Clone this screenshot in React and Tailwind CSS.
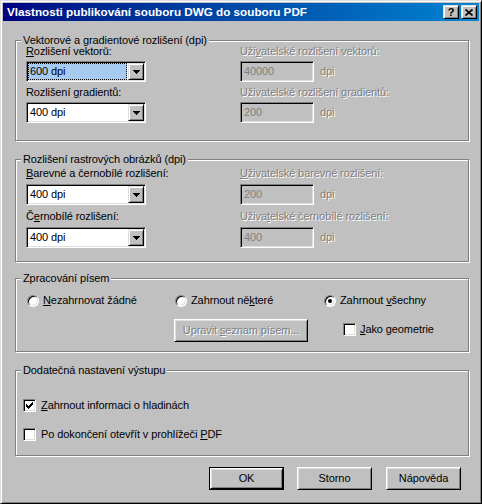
import React from "react";

const sunken =
  "border border-t-[#808080] border-l-[#808080] border-r-white border-b-white shadow-[inset_1px_1px_0_#000,inset_-1px_-1px_0_#dfdfdf]";
const raised =
  "border border-t-white border-l-white border-r-black border-b-black shadow-[inset_1px_1px_0_#dfdfdf,inset_-1px_-1px_0_#808080]";
const raisedSmall =
  "border border-t-[#dfdfdf] border-l-[#dfdfdf] border-r-black border-b-black shadow-[inset_1px_1px_0_#fff,inset_-1px_-1px_0_#808080]";
const dim = "text-[#808080] [text-shadow:1px_1px_0_#fff]";

function Key({ children }) {
  return <span className="underline">{children}</span>;
}

function Arrow() {
  return (
    <svg width="7" height="4" viewBox="0 0 7 4" shapeRendering="crispEdges">
      <rect x="0" y="0" width="7" height="1" fill="#000" />
      <rect x="1" y="1" width="5" height="1" fill="#000" />
      <rect x="2" y="2" width="3" height="1" fill="#000" />
      <rect x="3" y="3" width="1" height="1" fill="#000" />
    </svg>
  );
}

function Check() {
  const tops = [2, 3, 4, 3, 2, 1, 0];
  return (
    <svg width="7" height="7" viewBox="0 0 7 7" shapeRendering="crispEdges">
      {tops.map((y, x) => (
        <rect key={x} x={x} y={y} width="1" height="3" fill="#000" />
      ))}
    </svg>
  );
}

function Group({ title, className, children }) {
  return (
    <div className={`relative w-[454px] border border-[#808080] shadow-[inset_1px_1px_0_#fff,1px_1px_0_#fff] ${className}`}>
      <span className="absolute -top-[7px] left-[5px] bg-[#c0c0c0] px-[2px] leading-[13px]">{title}</span>
      {children}
    </div>
  );
}

function Combo({ value, focused }) {
  return (
    <div className={`flex h-[21px] w-[120px] bg-white p-[1px] ${sunken}`}>
      {focused ? (
        <div className="mr-[1px] flex flex-1 items-center border border-dotted border-black bg-[#a6caf0] pl-[1px]">
          {value}
        </div>
      ) : (
        <div className="flex flex-1 items-center pl-[2px]">{value}</div>
      )}
      <div className={`flex h-[17px] w-[16px] items-center justify-center bg-[#c0c0c0] ${raisedSmall}`}>
        <Arrow />
      </div>
    </div>
  );
}

function Edit({ value }) {
  return (
    <div className="flex items-center gap-[6px]">
      <div className={`flex h-[21px] w-[74px] items-center bg-[#c0c0c0] pl-[3px] text-[#808080] ${sunken}`}>
        {value}
      </div>
      <span className={dim}>dpi</span>
    </div>
  );
}

function Field({ label, disabled, gap, children }) {
  return (
    <div className={`flex flex-col ${gap}`}>
      <span className={`leading-[13px] ${disabled ? dim : ""}`}>{label}</span>
      {children}
    </div>
  );
}

function Radio({ checked, children }) {
  return (
    <div className="flex items-center gap-[4px] leading-[13px]">
      <div className="flex h-[12px] w-[12px] items-center justify-center rounded-full border border-t-[#808080] border-l-[#808080] border-r-white border-b-white bg-white shadow-[inset_1px_1px_0_#000,inset_-1px_-1px_0_#dfdfdf]">
        {checked && <div className="h-[4px] w-[4px] rounded-full bg-black" />}
      </div>
      <span>{children}</span>
    </div>
  );
}

function CheckBox({ checked, gap, children }) {
  return (
    <div className={`flex items-center leading-[13px] ${gap}`}>
      <div className={`flex h-[13px] w-[13px] items-center justify-center bg-white ${sunken}`}>
        {checked && <Check />}
      </div>
      <span>{children}</span>
    </div>
  );
}

function Button({ children, isDefault, className = "" }) {
  if (isDefault) {
    return (
      <div className={`h-[23px] w-[75px] border border-black ${className}`}>
        <div className={`flex h-full w-full items-center justify-center bg-[#c0c0c0] ${raised}`}>
          <span>{children}</span>
        </div>
      </div>
    );
  }
  return (
    <div className={`flex h-[23px] w-[75px] items-center justify-center bg-[#c0c0c0] ${raised} ${className}`}>
      <span>{children}</span>
    </div>
  );
}

export default function App() {
  return (
    <div className="flex h-[504px] w-[482px] flex-col border border-t-[#dfdfdf] border-l-[#dfdfdf] border-r-black border-b-black bg-[#c0c0c0] p-[2px] font-['Liberation_Sans',Arial,sans-serif] text-[11px] tracking-[-0.1px] text-black shadow-[inset_1px_1px_0_#fff,inset_-1px_-1px_0_#808080]">
      <div className="flex h-[18px] items-center justify-between bg-linear-to-r from-[#000080] to-[#1084d0] pl-[4px] pr-[2px]">
        <span className="text-[11.7px] font-bold tracking-normal text-white">
          Vlastnosti publikování souboru DWG do souboru PDF
        </span>
        <div className="flex gap-[2px]">
          <div className={`flex h-[14px] w-[16px] items-center justify-center bg-[#c0c0c0] text-[11px] font-bold leading-none ${raisedSmall}`}>
            ?
          </div>
          <div className={`flex h-[14px] w-[16px] items-center justify-center bg-[#c0c0c0] ${raisedSmall}`}>
            <svg width="8" height="7" viewBox="0 0 8 7">
              <path d="M0.5 0.5 L7.5 6.5 M7.5 0.5 L0.5 6.5" stroke="#000" strokeWidth="1.7" />
            </svg>
          </div>
        </div>
      </div>

      <div className="flex flex-col px-[12px]">
        <Group title="Vektorové a gradientové rozlišení (dpi)" className="mt-[19px] h-[101px]">
          <div className="grid grid-cols-[214px_1fr] gap-y-[4px] pl-[10px] pt-[4px]">
            <Field gap="gap-[3px]" label={<><Key>R</Key>ozlišení vektorů:</>}>
              <Combo value="600 dpi" focused />
            </Field>
            <Field gap="gap-[3px]" disabled label={<>Uži<Key>v</Key>atelské rozlišení vektorů:</>}>
              <Edit value="40000" />
            </Field>
            <Field gap="gap-[3px]" label={<>Rozlišení <Key>g</Key>radientů:</>}>
              <Combo value="400 dpi" />
            </Field>
            <Field gap="gap-[3px]" disabled label="Uživatelské rozlišení gradientů:">
              <Edit value="200" />
            </Field>
          </div>
        </Group>

        <Group title="Rozlišení rastrových obrázků (dpi)" className="mt-[18px] h-[103px]">
          <div className="grid grid-cols-[214px_1fr] gap-y-[5px] pl-[10px] pt-[7px]">
            <Field gap="gap-[4px]" label={<><Key>B</Key>arevné a černobílé rozlišení:</>}>
              <Combo value="400 dpi" />
            </Field>
            <Field gap="gap-[4px]" disabled label={<><Key>U</Key>živatelské barevné rozlišení:</>}>
              <Edit value="200" />
            </Field>
            <Field gap="gap-[4px]" label={<>Č<Key>e</Key>rnobílé rozlišení:</>}>
              <Combo value="400 dpi" />
            </Field>
            <Field gap="gap-[4px]" disabled label={<>Uživa<Key>t</Key>elské černobílé rozlišení:</>}>
              <Edit value="400" />
            </Field>
          </div>
        </Group>

        <Group title="Zpracování písem" className="mt-[16px] h-[74px]">
          <div className="grid grid-cols-[148px_149px_1fr] items-center gap-y-[12px] pl-[11px] pt-[15px]">
            <Radio>
              <Key>N</Key>ezahrnovat žádné
            </Radio>
            <Radio>
              Zahrnout ně<Key>k</Key>teré
            </Radio>
            <Radio checked>
              Zahrnout <Key>v</Key>šechny
            </Radio>
            <div />
            <div className={`-ml-[1px] flex h-[23px] w-[134px] items-center justify-center bg-[#c0c0c0] ${raised} ${dim}`}>
              <span>
                Upravit <Key>s</Key>eznam písem...
              </span>
            </div>
            <div className="-mt-[3px] pl-[19px]">
              <CheckBox gap="gap-[4px]">
                <Key>J</Key>ako geometrie
              </CheckBox>
            </div>
          </div>
        </Group>

        <Group title="Dodatečná nastavení výstupu" className="mt-[18px] h-[86px]">
          <div className="flex flex-col gap-[16px] pl-[7px] pt-[28px]">
            <CheckBox checked gap="gap-[5px]">
              <Key>Z</Key>ahrnout informaci o hladinách
            </CheckBox>
            <CheckBox gap="gap-[5px]">
              Po dokončení otevřít v prohlížeči <Key>P</Key>DF
            </CheckBox>
          </div>
        </Group>

        <div className="mt-[11px] flex pl-[194px]">
          <Button isDefault>OK</Button>
          <Button className="ml-[13px]">Storno</Button>
          <Button className="ml-[14px]">Nápověda</Button>
        </div>
      </div>
    </div>
  );
}
